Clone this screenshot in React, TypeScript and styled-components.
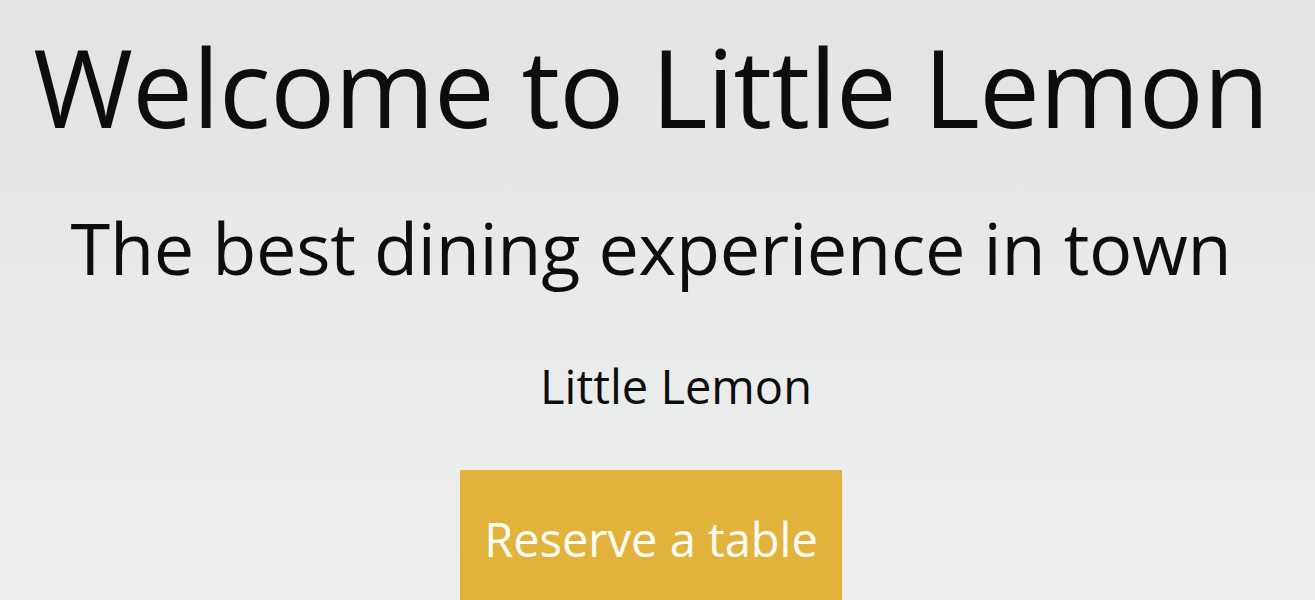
import React, { FC } from 'react';
import styled, { createGlobalStyle } from 'styled-components';

const GlobalStyle = createGlobalStyle`
  html, body {
    margin: 0;
    padding: 0;
  }
  body {
    font-family: 'Open Sans', 'Noto Sans', sans-serif;
    background: #e8e9e9;
  }
`;

const Hero = styled.section`
  display: flex;
  flex-direction: column;
  align-items: center;
  box-sizing: border-box;
  width: 100%;
  height: 600px;
  padding-right: 13px;
  overflow: hidden;
  background: linear-gradient(to bottom, #e1e3e4 0%, #e9eaea 50%, #efefef 100%);
  color: #0d0d0d;
  text-align: center;
`;

const Title = styled.h1`
  margin: 22px 0 0 0;
  font-size: 108px;
  font-weight: 400;
  line-height: 1.2;
  letter-spacing: -0.6px;
`;

const Subtitle = styled.h2`
  margin: 52px 0 0 0;
  font-size: 72px;
  font-weight: 400;
  line-height: 1.2;
  letter-spacing: -0.3px;
`;

const Brand = styled.p`
  margin: 68px 0 0 0;
  padding-left: 50px;
  font-size: 47px;
  line-height: 1.2;
`;

const ReserveButton = styled.button`
  margin-top: 56px;
  width: 382px;
  height: 130px;
  padding: 8px 0 0 0;
  border: none;
  border-radius: 0;
  background: #e2b33c;
  color: #fffdf5;
  font-family: inherit;
  font-size: 47px;
  cursor: pointer;
`;

const App: FC = () => {
  return (
    <>
      <GlobalStyle />
      <Hero>
        <Title>Welcome to Little Lemon</Title>
        <Subtitle>The best dining experience in town</Subtitle>
        <Brand>Little Lemon</Brand>
        <ReserveButton type="button">Reserve a table</ReserveButton>
      </Hero>
    </>
  );
};

export default App;
